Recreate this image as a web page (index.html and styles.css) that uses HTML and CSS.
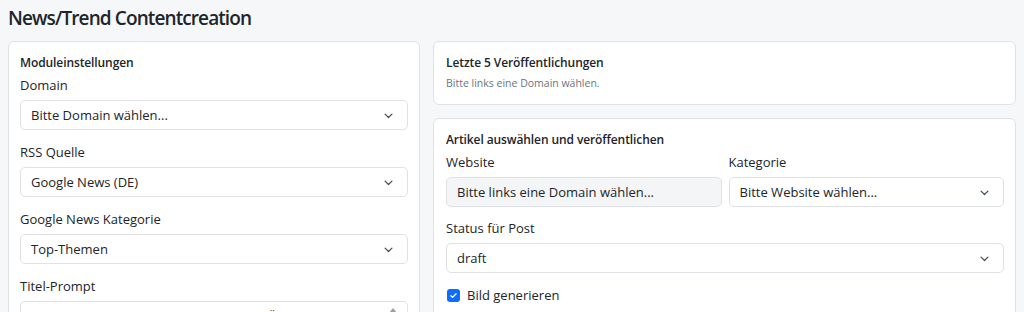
FILE: index.html
```html
<!DOCTYPE html>
<html lang="de">
<head>
<meta charset="utf-8">
<title>News/Trend Contentcreation</title>
<link rel="stylesheet" href="styles.css">
</head>
<body>
<main class="page">
  <h1 class="page-title">News/Trend Contentcreation</h1>
  <div class="layout">
    <section class="card">
      <h2 class="card-title">Moduleinstellungen</h2>
      <div class="field">
        <label class="label">Domain</label>
        <div class="select"><span>Bitte Domain wählen...</span><svg class="chev" viewBox="0 0 16 16" width="11" height="11"><path d="M3 6l5 5 5-5" fill="none" stroke="#495057" stroke-width="1.8" stroke-linecap="round" stroke-linejoin="round"/></svg></div>
      </div>
      <div class="field">
        <label class="label">RSS Quelle</label>
        <div class="select"><span>Google News (DE)</span><svg class="chev" viewBox="0 0 16 16" width="11" height="11"><path d="M3 6l5 5 5-5" fill="none" stroke="#495057" stroke-width="1.8" stroke-linecap="round" stroke-linejoin="round"/></svg></div>
      </div>
      <div class="field">
        <label class="label">Google News Kategorie</label>
        <div class="select"><span>Top-Themen</span><svg class="chev" viewBox="0 0 16 16" width="11" height="11"><path d="M3 6l5 5 5-5" fill="none" stroke="#495057" stroke-width="1.8" stroke-linecap="round" stroke-linejoin="round"/></svg></div>
      </div>
      <div class="field">
        <label class="label">Titel-Prompt</label>
        <div class="textarea"><span>Erstelle eine prägnante, ansprechende Überschrift für den folgenden Artikel</span><span class="scroll-up"></span></div>
      </div>
    </section>
    <div class="stack">
      <section class="card">
        <h2 class="card-title">Letzte 5 Veröffentlichungen</h2>
        <p class="muted">Bitte links eine Domain wählen.</p>
      </section>
      <section class="card">
        <h2 class="card-title">Artikel auswählen und veröffentlichen</h2>
        <div class="row">
          <div class="field">
            <label class="label">Website</label>
            <div class="input disabled">Bitte links eine Domain wählen...</div>
          </div>
          <div class="field">
            <label class="label">Kategorie</label>
            <div class="select"><span>Bitte Website wählen...</span><svg class="chev" viewBox="0 0 16 16" width="11" height="11"><path d="M3 6l5 5 5-5" fill="none" stroke="#495057" stroke-width="1.8" stroke-linecap="round" stroke-linejoin="round"/></svg></div>
          </div>
        </div>
        <div class="field">
          <label class="label">Status für Post</label>
          <div class="select"><span>draft</span><svg class="chev" viewBox="0 0 16 16" width="11" height="11"><path d="M3 6l5 5 5-5" fill="none" stroke="#495057" stroke-width="1.8" stroke-linecap="round" stroke-linejoin="round"/></svg></div>
        </div>
        <div class="check">
          <span class="box"><svg viewBox="0 0 12 12" width="9" height="9"><path d="M2.5 6.2l2.3 2.3 4.7-4.8" fill="none" stroke="#fff" stroke-width="1.8" stroke-linecap="round" stroke-linejoin="round"/></svg></span>
          <span>Bild generieren</span>
        </div>
      </section>
    </div>
  </div>
</main>
</body>
</html>
```

FILE: styles.css
```css
* { box-sizing: border-box; }
html, body { margin: 0; padding: 0; }
body {
  background: #f6f7f9;
  color: #212529;
  font-family: "Open Sans", "Noto Sans", sans-serif;
  font-size: 13px;
  overflow: hidden;
  height: 312px;
}
.page { padding: 0 8px; }
.page-title {
  margin: 0;
  padding-top: 6px;
  height: 41px;
  font-size: 19px;
  font-weight: 600;
  line-height: 24px;
  letter-spacing: -0.9px;
}
.layout {
  display: grid;
  grid-template-columns: 412px 583px;
  gap: 13px;
  align-items: start;
}
.stack { display: flex; flex-direction: column; gap: 13px; }
.card {
  background: #fff;
  border: 1px solid #dfe2e6;
  border-radius: 6px;
  padding: 11px 11px 12px 11px;
}
.stack .card { padding-left: 12px; }
.card-title {
  margin: 0 0 2px;
  font-size: 12px;
  font-weight: 600;
  line-height: 20px;
  letter-spacing: -0.1px;
}
.muted {
  margin: 0;
  font-size: 10.5px;
  line-height: 17px;
  color: #6c757d;
}
.field { margin-bottom: 12px; }
.label {
  display: block;
  line-height: 20px;
  margin-bottom: 5px;
}
.select, .input, .textarea {
  height: 30px;
  border: 1px solid #dee2e6;
  border-radius: 5px;
  background: #fff;
  padding: 0 10px;
  display: flex;
  align-items: center;
  justify-content: space-between;
}
.input.disabled { background: #f4f5f7; }
.chev { flex: none; margin-right: 3px; }
.textarea { align-items: flex-start; padding-top: 6px; height: 40px; }
.scroll-up {
  width: 0; height: 0;
  border-left: 4px solid transparent;
  border-right: 4px solid transparent;
  border-bottom: 5px solid #a0a0a0;
}
.row {
  display: grid;
  grid-template-columns: 1fr 1fr;
  gap: 7px;
}
.row .field { margin-bottom: 11px; }
.check {
  display: flex;
  align-items: center;
  gap: 7px;
  line-height: 20px;
  margin-top: 12px;
  padding-left: 1px;
}
.box {
  width: 13px; height: 13px;
  border-radius: 3px;
  background: #0d6efd;
  display: flex;
  align-items: center;
  justify-content: center;
}
```
